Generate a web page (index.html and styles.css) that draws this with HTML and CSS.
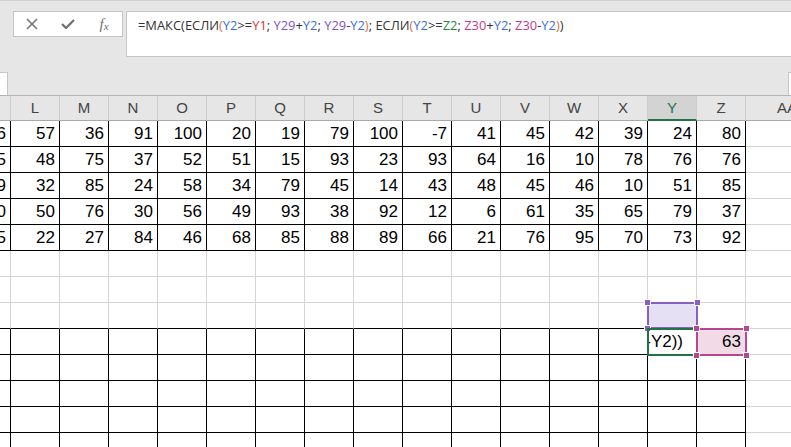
FILE: index.html
```html
<!DOCTYPE html>
<html lang="ru">
<head>
<meta charset="utf-8">
<title>Excel</title>
<link rel="stylesheet" href="styles.css">
</head>
<body>
<div class="app">
  <div class="formula-row">
    <div class="fbtns">
      <span class="fbtn"><svg width="12" height="12" viewBox="0 0 12 12"><path d="M1 1 L11 11 M11 1 L1 11" stroke="#707070" stroke-width="1.5" fill="none"/></svg></span>
      <span class="fbtn"><svg width="14" height="10" viewBox="0 0 14 10"><path d="M1 5 L5 9 L13 1" stroke="#707070" stroke-width="2.2" fill="none"/></svg></span>
      <span class="fbtn fx"><i>f</i><span class="fxx">x</span></span>
    </div>
    <div class="fbox">=МАКС(ЕСЛИ<span class="po">(</span><span class="cb">Y2</span>&gt;=<span class="cr">Y1</span>; <span class="cp">Y29</span>+<span class="cb">Y2</span>; <span class="cp">Y29</span>-<span class="cb">Y2</span><span class="po">)</span>; ЕСЛИ<span class="po">(</span><span class="cb">Y2</span>&gt;=<span class="cg">Z2</span>; <span class="cm">Z30</span>+<span class="cb">Y2</span>; <span class="cm">Z30</span>-<span class="cb">Y2</span><span class="po">)</span>)</div>
  </div>
  <div class="strip">
    <div class="namebox"></div>
    <div class="strip-fill"></div>
    <div class="rbox"></div>
  </div>
  <div class="sheet">
    <div class="row hdr">
      <div class="c k"></div><div class="c">L</div><div class="c">M</div><div class="c">N</div><div class="c">O</div><div class="c">P</div><div class="c">Q</div><div class="c">R</div><div class="c">S</div><div class="c">T</div><div class="c">U</div><div class="c">V</div><div class="c">W</div><div class="c">X</div><div class="c sel">Y</div><div class="c">Z</div><div class="c aa">AA</div>
    </div>
    <div class="row data">
      <div class="c k">16</div><div class="c">57</div><div class="c">36</div><div class="c">91</div><div class="c">100</div><div class="c">20</div><div class="c">19</div><div class="c">79</div><div class="c">100</div><div class="c">-7</div><div class="c">41</div><div class="c">45</div><div class="c">42</div><div class="c">39</div><div class="c">24</div><div class="c">80</div><div class="c aa"></div>
    </div>
    <div class="row data">
      <div class="c k">25</div><div class="c">48</div><div class="c">75</div><div class="c">37</div><div class="c">52</div><div class="c">51</div><div class="c">15</div><div class="c">93</div><div class="c">23</div><div class="c">93</div><div class="c">64</div><div class="c">16</div><div class="c">10</div><div class="c">78</div><div class="c">76</div><div class="c">76</div><div class="c aa"></div>
    </div>
    <div class="row data">
      <div class="c k">19</div><div class="c">32</div><div class="c">85</div><div class="c">24</div><div class="c">58</div><div class="c">34</div><div class="c">79</div><div class="c">45</div><div class="c">14</div><div class="c">43</div><div class="c">48</div><div class="c">45</div><div class="c">46</div><div class="c">10</div><div class="c">51</div><div class="c">85</div><div class="c aa"></div>
    </div>
    <div class="row data">
      <div class="c k">40</div><div class="c">50</div><div class="c">76</div><div class="c">30</div><div class="c">56</div><div class="c">49</div><div class="c">93</div><div class="c">38</div><div class="c">92</div><div class="c">12</div><div class="c">6</div><div class="c">61</div><div class="c">35</div><div class="c">65</div><div class="c">79</div><div class="c">37</div><div class="c aa"></div>
    </div>
    <div class="row data">
      <div class="c k">15</div><div class="c">22</div><div class="c">27</div><div class="c">84</div><div class="c">46</div><div class="c">68</div><div class="c">85</div><div class="c">88</div><div class="c">89</div><div class="c">66</div><div class="c">21</div><div class="c">76</div><div class="c">95</div><div class="c">70</div><div class="c">73</div><div class="c">92</div><div class="c aa"></div>
    </div>
    <div class="row plain">
      <div class="c k"></div><div class="c"></div><div class="c"></div><div class="c"></div><div class="c"></div><div class="c"></div><div class="c"></div><div class="c"></div><div class="c"></div><div class="c"></div><div class="c"></div><div class="c"></div><div class="c"></div><div class="c"></div><div class="c"></div><div class="c"></div><div class="c aa"></div>
    </div>
    <div class="row plain">
      <div class="c k"></div><div class="c"></div><div class="c"></div><div class="c"></div><div class="c"></div><div class="c"></div><div class="c"></div><div class="c"></div><div class="c"></div><div class="c"></div><div class="c"></div><div class="c"></div><div class="c"></div><div class="c"></div><div class="c"></div><div class="c"></div><div class="c aa"></div>
    </div>
    <div class="row plain edge">
      <div class="c k"></div><div class="c"></div><div class="c"></div><div class="c"></div><div class="c"></div><div class="c"></div><div class="c"></div><div class="c"></div><div class="c"></div><div class="c"></div><div class="c"></div><div class="c"></div><div class="c"></div><div class="c"></div><div class="c hold"><span class="ref ref-purple"><i class="h tl"></i><i class="h tr"></i><i class="h bl"></i><i class="h br"></i></span></div><div class="c"></div><div class="c aa"></div>
    </div>
    <div class="row data">
      <div class="c k"></div><div class="c"></div><div class="c"></div><div class="c"></div><div class="c"></div><div class="c"></div><div class="c"></div><div class="c"></div><div class="c"></div><div class="c"></div><div class="c"></div><div class="c"></div><div class="c"></div><div class="c"></div><div class="c hold edit"><span class="clip">Z30-Y2))</span><span class="active"></span></div><div class="c hold pink"><span class="val">63</span><span class="ref ref-pink"><i class="h tl"></i><i class="h tr"></i><i class="h bl"></i><i class="h br"></i></span></div><div class="c aa"></div>
    </div>
    <div class="row data">
      <div class="c k"></div><div class="c"></div><div class="c"></div><div class="c"></div><div class="c"></div><div class="c"></div><div class="c"></div><div class="c"></div><div class="c"></div><div class="c"></div><div class="c"></div><div class="c"></div><div class="c"></div><div class="c"></div><div class="c"></div><div class="c"></div><div class="c aa"></div>
    </div>
    <div class="row data">
      <div class="c k"></div><div class="c"></div><div class="c"></div><div class="c"></div><div class="c"></div><div class="c"></div><div class="c"></div><div class="c"></div><div class="c"></div><div class="c"></div><div class="c"></div><div class="c"></div><div class="c"></div><div class="c"></div><div class="c"></div><div class="c"></div><div class="c aa"></div>
    </div>
    <div class="row data">
      <div class="c k"></div><div class="c"></div><div class="c"></div><div class="c"></div><div class="c"></div><div class="c"></div><div class="c"></div><div class="c"></div><div class="c"></div><div class="c"></div><div class="c"></div><div class="c"></div><div class="c"></div><div class="c"></div><div class="c"></div><div class="c"></div><div class="c aa"></div>
    </div>
    <div class="row data">
      <div class="c k"></div><div class="c"></div><div class="c"></div><div class="c"></div><div class="c"></div><div class="c"></div><div class="c"></div><div class="c"></div><div class="c"></div><div class="c"></div><div class="c"></div><div class="c"></div><div class="c"></div><div class="c"></div><div class="c"></div><div class="c"></div><div class="c aa"></div>
    </div>
  </div>
</div>
</body>
</html>
```

FILE: styles.css
```css
html, body {
  margin: 0;
  padding: 0;
  overflow: hidden;
  background: #e6e6e6;
}

.app {
  width: 791px;
  height: 447px;
  overflow: hidden;
  background: #e6e6e6;
  border-top: 1px solid #d2d2d2;
  box-sizing: border-box;
}

.formula-row {
  display: flex;
  align-items: flex-start;
  gap: 3px;
  padding: 10px 0 0 13px;
  height: 46px;
  box-sizing: content-box;
}

.fbtns {
  box-sizing: border-box;
  width: 110px;
  height: 26px;
  background: #fff;
  border: 1px solid #c6c6c6;
  display: grid;
  grid-template-columns: 36px 36px 36px;
  align-items: center;
  justify-items: center;
}

.fbtn {
  display: flex;
  align-items: center;
  justify-content: center;
  height: 24px;
}

.fx {
  font-family: "Liberation Serif", serif;
  font-size: 15px;
  color: #707070;
  line-height: 1;
}

.fx i {
  font-style: italic;
}

.fxx {
  font-style: italic;
  font-size: 11px;
  position: relative;
  top: 2px;
}

.fbox {
  flex: 1;
  box-sizing: border-box;
  height: 46px;
  margin-right: -4px;
  background: #fff;
  border: 1px solid #c6c6c6;
  padding: 4px 0 0 11px;
  font-family: "Open Sans", "Noto Sans", sans-serif;
  font-size: 12.9px;
  line-height: 18px;
  color: #333;
  white-space: nowrap;
}

.po { color: #e0703c; }
.cb { color: #3b6fd8; }
.cr { color: #d8343a; }
.cp { color: #8350c8; }
.cg { color: #1f8a3a; }
.cm { color: #c23b8c; }

.strip {
  display: flex;
  align-items: flex-end;
  height: 38px;
  border-bottom: 1px solid #b4b4b4;
}

.namebox {
  width: 7px;
  height: 22px;
  background: #fff;
  border-top: 1px solid #c6c6c6;
  border-right: 1px solid #c6c6c6;
}

.strip-fill {
  flex: 1;
}

.rbox {
  width: 2px;
  height: 22px;
  background: #fff;
  border-top: 1px solid #c6c6c6;
  border-left: 1px solid #c6c6c6;
}

.sheet {
  background: #fff;
}

.row {
  display: flex;
  height: 26px;
}

.c {
  box-sizing: border-box;
  flex: none;
  width: 49px;
  height: 26px;
  border-right: 1px solid #d4d4d4;
  border-bottom: 1px solid #d4d4d4;
  display: flex;
  justify-content: flex-end;
  align-items: center;
  padding-right: 4px;
  overflow: hidden;
  white-space: nowrap;
  font-family: "Liberation Sans", Arial, sans-serif;
  font-size: 17px;
  line-height: 25px;
  color: #000;
}

.c.k {
  width: 11px;
}

.c.aa {
  width: 84px;
  border-right: none;
}

.data .c {
  border-color: #000;
}

.data .c.aa {
  border-bottom-color: #d4d4d4;
}

.edge .c {
  border-bottom-color: #000;
}

.edge .c.aa {
  border-bottom-color: #d4d4d4;
}

.hdr {
  height: 25px;
  background: #e6e6e6;
}

.hdr .c {
  height: 25px;
  justify-content: center;
  padding: 0;
  border-right: 1px solid #cdcdcd;
  border-bottom: 1px solid #a9a9a9;
  font-size: 15px;
  line-height: 24px;
  color: #444;
  background: #e6e6e6;
}

.hdr .c.aa {
  justify-content: flex-start;
  padding-left: 31px;
}

.hdr .c.sel {
  background: #d3d3d3;
  color: #217346;
  border-bottom: 2px solid #217346;
}

.c.hold {
  position: relative;
  overflow: visible;
}

.clip {
  display: flex;
  justify-content: flex-end;
  width: 48px;
  margin-right: -4px;
  padding-right: 13px;
  box-sizing: border-box;
  overflow: hidden;
}

.active {
  position: absolute;
  left: -1px;
  top: -1px;
  width: 51px;
  height: 28px;
  box-sizing: border-box;
  border: 2px solid #217346;
}

.pink {
  background: #f2dbe7;
}

.val {
  position: relative;
  z-index: 1;
}

.ref {
  position: absolute;
  top: -1px;
  left: -1px;
  width: 51px;
  height: 27px;
  box-sizing: border-box;
  border: 2px solid;
}

.ref-purple {
  border-color: #8660c4;
  background: #e5e0f4;
}

.ref-pink {
  border-color: #b5478f;
  height: 28px;
}

.h {
  position: absolute;
  width: 5px;
  height: 5px;
  border: 1px solid #fff;
  box-sizing: content-box;
}

.ref-purple .h { background: #8660c4; }
.ref-pink .h { background: #b5478f; }

.h.tl { left: -5px; top: -5px; }
.h.tr { right: -5px; top: -5px; }
.h.bl { left: -5px; bottom: -5px; }
.h.br { right: -5px; bottom: -5px; }
```
